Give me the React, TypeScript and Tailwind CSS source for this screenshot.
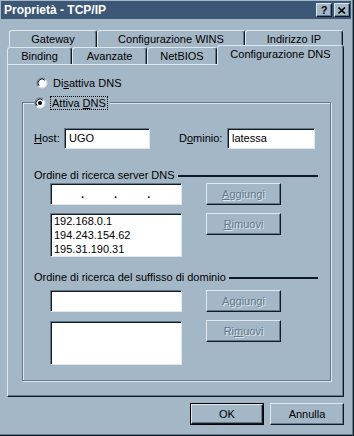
import React from 'react';

const raised =
  'border border-t-[#dfe8ef] border-l-[#dfe8ef] border-r-[#0f1a24] border-b-[#0f1a24] shadow-[inset_-1px_-1px_0_#63788a]';
const sunken =
  'border border-t-[#63788a] border-l-[#63788a] border-r-[#dfe8ef] border-b-[#dfe8ef] shadow-[inset_1px_1px_0_#0f1a24]';

function Radio({ checked }: { checked?: boolean }) {
  return (
    <svg width="12" height="12" viewBox="0 0 12 12" className="shrink-0">
      <circle cx="6" cy="6" r="4.5" fill="#ffffff" />
      <path d="M2.46 9.54 A5 5 0 0 1 9.54 2.46" stroke="#63788a" strokeWidth="1" fill="none" />
      <path d="M9.54 2.46 A5 5 0 0 1 2.46 9.54" stroke="#dfe8ef" strokeWidth="1" fill="none" />
      <path d="M3.17 8.83 A4 4 0 0 1 8.83 3.17" stroke="#0f1a24" strokeWidth="1" fill="none" />
      {checked && <circle cx="6" cy="6" r="2" fill="#000000" />}
    </svg>
  );
}

function Tab({ label, w, selected }: { label: string; w: number; selected?: boolean }) {
  return (
    <div
      style={{ width: w }}
      className={`flex items-center justify-center bg-[#a4b7c6] border-t border-l border-[#dfe8ef] border-r border-r-[#0f1a24] shadow-[inset_-1px_0_0_#63788a] rounded-t-[3px] ${
        selected ? 'relative top-[1px] z-10 h-[20px]' : 'h-[17px]'
      }`}
    >
      <span className={selected ? 'pb-[2px]' : ''}>{label}</span>
    </div>
  );
}

function DisabledButton({ children }: { children: React.ReactNode }) {
  return (
    <div className={`w-[75px] h-[22px] flex items-center justify-center bg-[#a4b7c6] ${raised}`}>
      <span className="text-[#63788a] [text-shadow:1px_1px_0_#dfe8ef]">{children}</span>
    </div>
  );
}

function SectionTitle({ text }: { text: string }) {
  return (
    <div className="flex items-center h-[13px] pl-[11px] pr-[12px]">
      <span className="whitespace-nowrap">{text}</span>
      <div className="flex-1 ml-[3px] h-[2px] bg-[#0f1a24]" />
    </div>
  );
}

export default function App() {
  return (
    <div className="w-[354px] h-[436px] bg-[#a4b7c6] text-black text-[11px] leading-[13px] font-['Liberation_Sans',Arial,sans-serif] border-r border-b border-[#0f1a24] shadow-[inset_-1px_-1px_0_#63788a] overflow-hidden">
      {/* title bar */}
      <div className="pt-[1px] pl-[1px] pr-[2px]">
        <div className="h-[18px] bg-[#3c5876] flex items-center justify-between pl-[3px] pr-[1px]">
          <span className="text-white font-bold text-[12px]">Proprietà - TCP/IP</span>
          <div className="flex gap-[2px]">
            <div className={`w-[16px] h-[14px] bg-[#a4b7c6] flex items-center justify-center font-bold text-[11px] ${raised}`}>
              ?
            </div>
            <div className={`w-[16px] h-[14px] bg-[#a4b7c6] flex items-center justify-center ${raised}`}>
              <svg width="8" height="7" viewBox="0 0 8 7">
                <path d="M0.5 0.5 L7 6.5 M7 0.5 L0.5 6.5" stroke="#000" strokeWidth="1.6" />
              </svg>
            </div>
          </div>
        </div>
      </div>

      {/* tabs */}
      <div className="mt-[11px] ml-[7px] w-[337px]">
        <div className="flex pl-[2px]">
          <Tab label="Gateway" w={88} />
          <Tab label="Configurazione WINS" w={148} />
          <Tab label="Indirizzo IP" w={98} />
        </div>
        <div className="flex items-end h-[17px]">
          <Tab label="Binding" w={65} />
          <Tab label="Avanzate" w={75} />
          <Tab label="NetBIOS" w={70} />
          <Tab label="Configurazione DNS" w={127} selected />
        </div>

        {/* panel */}
        <div className="h-[333px] border-t border-l border-[#dfe8ef] border-r border-b border-r-[#0f1a24] border-b-[#0f1a24] shadow-[inset_-1px_-1px_0_#63788a]">
          <div className="flex items-center h-[12px] mt-[12px] pl-[28px] gap-[5px]">
            <Radio />
            <span>
              Di<u>s</u>attiva DNS
            </span>
          </div>

          {/* group box */}
          <div className="ml-[14px] mt-[13px] w-[309px] h-[279px] border border-[#63788a] shadow-[inset_1px_1px_0_#dfe8ef,1px_1px_0_#dfe8ef]">
            <div className="-mt-[7px] ml-[11px] w-fit h-[14px] flex items-center gap-[4px] bg-[#a4b7c6] pr-[2px]">
              <Radio checked />
              <span className="border border-dotted border-black px-[1px] leading-[12px]">
                Attiva <u>D</u>NS
              </span>
            </div>

            <div className="flex items-center h-[21px] mt-[18px] pl-[11px]">
              <span className="w-[30px]">
                <u>H</u>ost:
              </span>
              <div className={`w-[86px] h-[21px] bg-white flex items-center pl-[4px] ${sunken}`}>UGO</div>
              <span className="ml-[29px] w-[48px]">
                D<u>o</u>minio:
              </span>
              <div className={`w-[88px] h-[21px] bg-white flex items-center pl-[4px] ${sunken}`}>latessa</div>
            </div>

            <div className="mt-[20px]">
              <SectionTitle text="Ordine di ricerca server DNS" />
            </div>
            <div className="flex mt-[1px] pl-[27px] gap-[24px]">
              <div className="flex flex-col gap-[8px]">
                <div className={`w-[132px] h-[22px] bg-white flex items-center ${sunken}`}>
                  <div className="flex w-full pl-[30px] gap-[30px] font-bold">
                    <span>.</span>
                    <span>.</span>
                    <span>.</span>
                  </div>
                </div>
                <div className={`w-[132px] h-[44px] bg-white pl-[3px] pt-[0px] leading-[14px] ${sunken}`}>
                  <div>192.168.0.1</div>
                  <div>194.243.154.62</div>
                  <div>195.31.190.31</div>
                </div>
              </div>
              <div className="flex flex-col gap-[8px]">
                <DisabledButton>
                  <u>A</u>ggiungi
                </DisabledButton>
                <DisabledButton>
                  <u>R</u>imuovi
                </DisabledButton>
              </div>
            </div>

            <div className="mt-[14px]">
              <SectionTitle text="Ordine di ricerca del suffisso di dominio" />
            </div>
            <div className="flex mt-[6px] pl-[27px] gap-[24px]">
              <div className="flex flex-col gap-[9px]">
                <div className={`w-[132px] h-[22px] bg-white ${sunken}`} />
                <div className={`w-[132px] h-[44px] bg-white ${sunken}`} />
              </div>
              <div className="flex flex-col gap-[8px]">
                <DisabledButton>
                  A<u>g</u>giungi
                </DisabledButton>
                <DisabledButton>
                  Ri<u>m</u>uovi
                </DisabledButton>
              </div>
            </div>
          </div>
        </div>
      </div>

      {/* bottom buttons */}
      <div className="flex justify-end gap-[6px] mt-[6px] pr-[9px]">
        <div className="w-[74px] h-[22px] border border-black">
          <div className={`w-full h-full bg-[#a4b7c6] flex items-center justify-center ${raised}`}>OK</div>
        </div>
        <div className={`w-[74px] h-[22px] bg-[#a4b7c6] flex items-center justify-center ${raised}`}>Annulla</div>
      </div>
    </div>
  );
}
